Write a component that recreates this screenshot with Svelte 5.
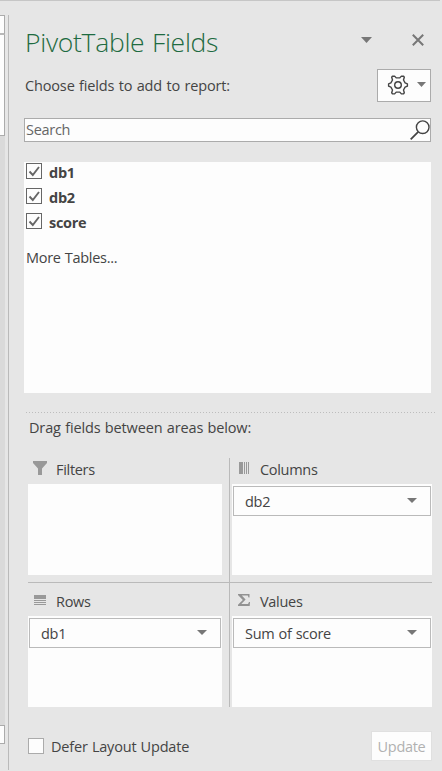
<script>
  const fields = ['db1', 'db2', 'score'];
  const areas = [
    { name: 'Filters', icon: 'filter', item: null },
    { name: 'Columns', icon: 'columns', item: 'db2' },
    { name: 'Rows', icon: 'rows', item: 'db1' },
    { name: 'Values', icon: 'sigma', item: 'Sum of score' }
  ];
</script>

{#snippet caret(w, h)}
  <svg class="caret" width={w} height={h} viewBox="0 0 12 6" preserveAspectRatio="none"><path d="M0 0H12L6 6Z" fill="#777" /></svg>
{/snippet}

<div class="app">
  <div class="sheet">
    <div class="cell head"></div>
    <div class="cell body"></div>
    <div class="track"></div>
    <div class="cell foot"></div>
  </div>
  <aside class="pane">
    <header>
      <h1>PivotTable Fields</h1>
      <span class="menu">{@render caret(11, 6)}</span>
      <svg class="close" width="12" height="12" viewBox="0 0 12 12"><path d="M.8.8 11.2 11.2M11.2.8.8 11.2" stroke="#777" stroke-width="2" /></svg>
    </header>
    <div class="choose">
      <span class="hint">Choose fields to add to report:</span>
      <button class="gear" aria-label="Tools">
        <svg width="22" height="20" viewBox="-11 -10 22 20" fill="none" stroke="#444" stroke-width="1.4" stroke-linejoin="round">
          <path d="M-5.6 -8.7 -3.4 -8.9 -1.8 -7.1H1.8L3.4 -8.9 5.6 -8.7 6.3 -7.8 5.5 -5 7.1 -2.1 9.4 -1.2V1.2L7.1 2.1 5.5 5 6.3 7.8 5.6 8.7 3.4 8.9 1.8 7.1H-1.8L-3.4 8.9 -5.6 8.7 -6.3 7.8 -5.5 5 -7.1 2.1 -9.4 1.2V-1.2L-7.1 -2.1 -5.5 -5 -6.3 -7.8Z" />
          <circle r="3.3" />
        </svg>
        {@render caret(9, 5)}
      </button>
    </div>
    <div class="search">
      <span>Search</span>
      <svg width="20" height="20" viewBox="0 0 20 20" fill="none" stroke="#444" stroke-width="1.4"><circle cx="12.7" cy="7.2" r="6.3" /><path d="M8.2 11.8.7 19.3" stroke-width="1.8" /></svg>
    </div>
    <div class="list">
      {#each fields as f}
        <div class="field">
          <span class="check"><svg width="14" height="14" viewBox="0 0 14 14"><path d="M2.5 7.5 5.8 11 12 3" fill="none" stroke="#666" stroke-width="1.9" /></svg></span>
          <b>{f}</b>
        </div>
      {/each}
      <div class="more">More Tables...</div>
    </div>
    <div class="dots"></div>
    <div class="drag">Drag fields between areas below:</div>
    <div class="areas">
      {#each areas as a}
        <section>
          <div class="label">
            <span class="icon">
              {#if a.icon === 'filter'}
                <svg width="14" height="14" viewBox="0 0 14 14" fill="#999"><path d="M0 0H14V2L9 7.5V14H5V7.5L0 2Z" /></svg>
              {:else if a.icon === 'columns'}
                <svg class="cols" width="10" height="12" viewBox="0 0 10 12" fill="#999" shape-rendering="crispEdges"><path d="M0 0H4V12H0ZM5 0H6V12H5ZM7 0H8V12H7ZM9 0H10V12H9Z" /></svg>
              {:else if a.icon === 'rows'}
                <svg class="rows" width="12" height="10" viewBox="0 0 12 10" fill="#999" shape-rendering="crispEdges"><path d="M0 0H12V4H0ZM0 5H12V6H0ZM0 7H12V8H0ZM0 9H12V10H0Z" /></svg>
              {:else}
                <svg class="sig" width="12" height="12" viewBox="0 0 12 12" fill="#929292"><path d="M0 0H11.5V3.5H10.5L9.8 1.5H3.8L7.6 5.6 3.3 10H10L11 8H12L11.7 12H0V10.7L4.8 6 0 1Z" /></svg>
              {/if}
            </span>
            <span class="name">{a.name}</span>
          </div>
          <div class="drop">
            {#if a.item}
              <div class="pill"><span>{a.item}</span>{@render caret(10, 5)}</div>
            {/if}
          </div>
        </section>
      {/each}
    </div>
    <footer>
      <span class="box"></span>
      <span class="defer">Defer Layout Update</span>
      <button class="update" disabled>Update</button>
    </footer>
  </aside>
</div>

<style>
  :global(body) { margin: 0; background: #e6e6e6; }
  .app, .app * { box-sizing: border-box; }
  .app {
    width: 442px; height: 771px; display: flex; overflow: hidden;
    background: linear-gradient(#c6c6c6, #c6c6c6) 0 0 / 440px 1px no-repeat #e6e6e6;
    color: #444; font: 14.5px/20px "Open Sans", "Noto Sans", sans-serif; letter-spacing: -0.3px; word-spacing: 0.7px; white-space: nowrap;
  }
  svg { display: block; flex: none; }
  button { font: inherit; letter-spacing: inherit; margin: 0; padding: 0; background: #fdfdfd; }
  .sheet { width: 5px; margin-top: 15px; display: flex; flex-direction: column; }
  .cell { background: #fdfdfd; border: 1px solid #ababab; border-left: 0; }
  .head { height: 20px; border-bottom-width: 2px; border-bottom-color: #b8b8b8; }
  .body { height: 101px; border-top: 0; }
  .track { height: 589px; background: #dadada; }
  .foot { height: 19px; }
  .pane { width: 434px; height: 755px; margin: 15px 0 0 3px; border-left: 1px solid #bababa; padding-left: 15px; }
  header { display: flex; height: 55px; padding-top: 9px; }
  h1 { margin: 0; width: 336px; padding-left: 1px; font-size: 26.5px; line-height: 36px; font-weight: 300; color: #1e6b41; letter-spacing: -0.3px; word-spacing: 1px; }
  .menu { width: 52px; padding: 13px 0 0 1px; }
  .close { margin-top: 10px; }
  .choose { display: flex; height: 48px; width: 407px; justify-content: space-between; }
  .hint { padding: 6px 0 0 1px; letter-spacing: -0.15px; word-spacing: 0.8px; }
  .gear { margin-top: -1px; width: 54px; height: 33px; border: 1px solid #ababab; display: flex; align-items: center; padding: 0 0 2px 9px; gap: 8px; }
  .search { width: 407px; height: 24px; border: 1px solid #ababab; background: #fdfdfd; display: flex; justify-content: space-between; color: #666; line-height: 22px; padding-left: 1px; }
  .search svg { margin-top: 1px; }
  .list { margin-top: 20px; width: 407px; height: 231px; background: #fdfdfd; padding: 1px 0 0 2px; }
  .field { display: flex; height: 25px; gap: 7px; }
  .check { width: 16px; height: 16px; border: 1px solid #666; }
  b { font-size: 14.5px; line-height: 20px; letter-spacing: -0.3px; }
  .more { margin-top: 10px; }
  .dots { margin: 19px 0 0 2px; width: 409px; height: 1px; background: repeating-linear-gradient(90deg, #bdbdbd 0 1px, transparent 1px 3px); }
  .drag { margin: 5px 0 0 5px; height: 40px; letter-spacing: -0.15px; word-spacing: 0.8px; }
  .areas {
    margin-left: 4px; width: 404px; height: 249px; display: grid; grid-template: 124px 125px / 201px 203px;
    background: linear-gradient(#bababa, #bababa) 201px 0 / 1px 100% no-repeat, linear-gradient(#bababa, #bababa) 0 124px / 100% 1px no-repeat;
  }
  section:nth-child(odd) { padding-right: 7px; }
  section:nth-child(even) { padding-left: 3px; }
  section:nth-child(n + 3) { padding-top: 8px; }
  .label { height: 26px; display: flex; padding-top: 1px; }
  .name { padding-top: 1px; }
  .icon { width: 28px; padding: 2px 0 0 5px; }
  section:nth-child(even) .icon { width: 28px; padding-left: 7px; }
  .cols { margin-top: 1px; }
  .rows { margin: 2px 0 0 1px; }
  .sig { margin: 1px 0 0 -1px; }
  .drop { height: 91px; background: #fdfdfd; padding: 2px 1px 0; }
  .pill { height: 30px; border: 1px solid #bababa; display: flex; align-items: center; justify-content: space-between; padding: 1px 13px 0 11px; }
  .pill .caret { margin-top: -3px; }
  footer { margin: 24px 0 0 4px; width: 404px; height: 30px; display: flex; }
  .box { width: 16px; height: 16px; margin-top: 7px; border: 1px solid #ababab; background: #fdfdfd; }
  .defer { margin: 6px auto 0 7px; letter-spacing: -0.2px; }
  .update { width: 61px; height: 30px; border: 1px solid #e0e0e0; color: #b1b1b1; padding-top: 1px; }
</style>
